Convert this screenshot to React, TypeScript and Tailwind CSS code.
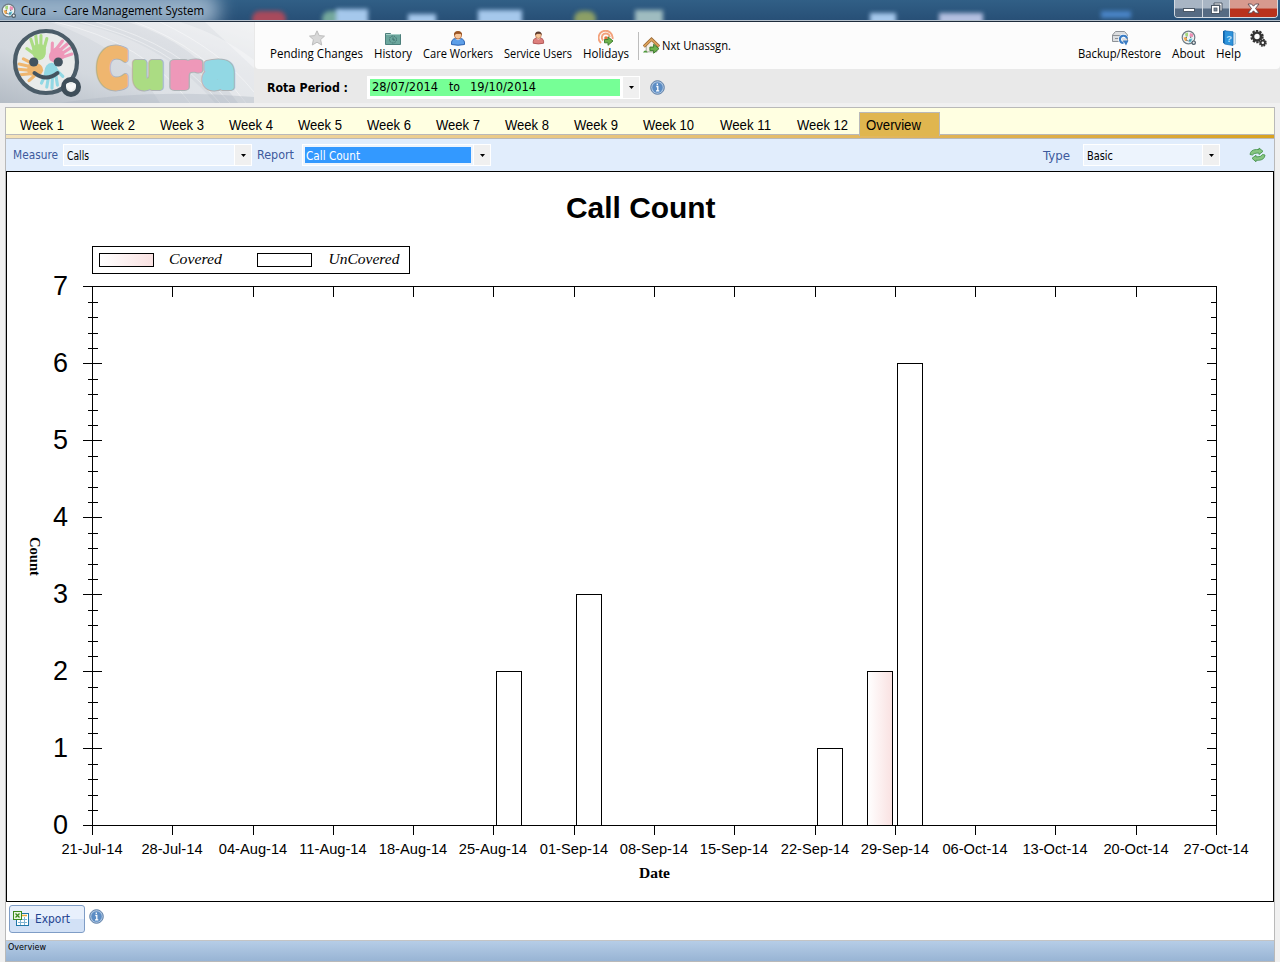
import React from 'react';

const UI = "font-['Open_Sans','Noto_Sans',sans-serif]";
const TAH = "font-['DejaVu_Sans_Condensed','DejaVu_Sans',sans-serif]";

/* Text squeezed or stretched to an exact advance width. */
function Fit({ text, w, size, family, color = '#000', weight = 400, h = 16, base = 12 }: {
  text: string; w: number; size: number; family: string; color?: string; weight?: number; h?: number; base?: number;
}) {
  return (
    <svg width={w} height={h} className="block shrink-0 overflow-visible">
      <text x="0" y={base} textLength={w} lengthAdjust="spacingAndGlyphs" fontSize={size} fontFamily={family} fontWeight={weight} fill={color} className="whitespace-pre">
        {text}
      </text>
    </svg>
  );
}

const SEGOE = 'Open Sans, Noto Sans, sans-serif';
const TAHOMA = 'DejaVu Sans Condensed, DejaVu Sans, sans-serif';
const ARIAL = 'Liberation Sans, Arial, sans-serif';
const TIMES = 'Liberation Serif, Times New Roman, serif';

function Hand({ x, y, r, color, s = 1 }: { x: number; y: number; r: number; color: string; s?: number }) {
  return (
    <g transform={`translate(${x} ${y}) rotate(${r}) scale(${s})`} stroke={color} fill={color} strokeLinecap="round">
      <path d="M-6 0Q-6 -5 0 -5Q6 -5 6 0Q6 8 0 9Q-6 8 -6 0Z" stroke="none" />
      <path d="M-4.5 -2L-6.5 -10M-1.5 -3L-2 -13M1.8 -3L2.6 -12.5M4.5 -1L7.5 -9.5M-4.5 3L-10.5 -2" strokeWidth="2.7" fill="none" />
    </g>
  );
}

function Logo() {
  return (
    <svg width="254" height="81" viewBox="0 22 254 81" className="block shrink-0">
      <defs>
        <linearGradient id="bn" x1="0" y1="1" x2="1" y2="0">
          <stop offset="0" stopColor="#b4bcc5" />
          <stop offset="0.35" stopColor="#d3d8de" />
          <stop offset="0.7" stopColor="#dcdfe4" />
          <stop offset="1" stopColor="#ebedef" />
        </linearGradient>
        <clipPath id="face"><circle cx="46" cy="62" r="29" /></clipPath>
      </defs>
      <rect x="0" y="22" width="254" height="81" fill="url(#bn)" />
      <path d="M70 22Q160 38 215 103H160Q130 50 50 22Z" fill="#fff" opacity="0.22" />
      <path d="M128 22Q195 42 238 103H254V60Q220 34 180 22Z" fill="#fff" opacity="0.32" />
      <path d="M205 22L254 68V22Z" fill="#fff" opacity="0.35" />
      <path d="M55 22Q145 42 190 103M80 22Q170 42 220 103M96 22Q180 44 230 103M135 22Q205 48 246 103M160 22Q220 50 254 92" fill="none" stroke="#fff" strokeWidth="0.7" opacity="0.6" />
      <path d="M60 103Q150 88 254 97V103Z" fill="#a9b3be" opacity="0.35" />
      <circle cx="46" cy="62" r="30.5" fill="#e9ebea" />
      <g clipPath="url(#face)">
        <Hand x={39} y={50} r={-4} color="#abdc83" s={1.15} />
        <Hand x={58} y={54} r={52} color="#ee98b9" s={1.15} />
        <Hand x={33} y={69} r={-82} color="#efb66f" s={1.15} />
        <Hand x={51} y={73} r={185} color="#92d8e4" s={1.15} />
      </g>
      <circle cx="46" cy="62" r="31" fill="none" stroke="#4b5c68" strokeWidth="4.2" />
      <circle cx="33.7" cy="62" r="4.6" fill="#43535f" />
      <circle cx="58.3" cy="62" r="4.6" fill="#43535f" />
      <path d="M34.5 73Q46 82 57.5 73" fill="none" stroke="#43535f" strokeWidth="4" strokeLinecap="round" />
      <circle cx="71" cy="87" r="7.5" fill="#e9ebea" stroke="#3f4e59" strokeWidth="5" />
      <path d="M71 91L66 86.5Q65.5 82.5 69 83L71 84.5L73 83Q76.500 82.500 76 86.500Z" fill="#f6f7f7" />
      <g fontFamily="DejaVu Sans, sans-serif" fontWeight="700" strokeLinejoin="round">
        {[
          ['C', 97, 87, 51, 31, '#efb66f'],
          ['u', 132.5, 87.2, 44, 31, '#abdc83'],
          ['r', 169.5, 87.2, 44, 29, '#ee98b9'],
          ['a', 203.500, 87.2, 44, 31, '#92d8e4'],
        ].map(([c, x, y, s, w, f]) => (
          <g key={c as string}>
            <text x={x} y={y} fontSize={s} textLength={w} lengthAdjust="spacingAndGlyphs" fill="#aeb3b6" stroke="#aeb3b6" strokeWidth="7.8">{c}</text>
            <text x={x} y={y} fontSize={s} textLength={w} lengthAdjust="spacingAndGlyphs" fill={f as string} stroke={f as string} strokeWidth="5.8">{c}</text>
          </g>
        ))}
      </g>
    </svg>
  );
}

function SmallFace() {
  return (
    <svg width="16" height="16" viewBox="0 0 16 16" className="block shrink-0">
      <circle cx="7.500" cy="7.500" r="6.300" fill="#f0f3f3" stroke="#707d86" strokeWidth="1.200" />
      <path d="M4 3.500L7 2.500V6.500L4.500 6Z" fill="#a4d87b" />
      <path d="M9 3L12 4V7L8.500 6.500Z" fill="#ed8fb4" />
      <path d="M2.500 7.500L6 7V11L4 11Z" fill="#efa950" />
      <path d="M8 9L11.500 8.500L10 12L8 12.500Z" fill="#5fc6dc" />
      <circle cx="5.300" cy="7.300" r=".7" fill="#5d6c77" />
      <circle cx="9.700" cy="7.300" r=".7" fill="#5d6c77" />
      <path d="M5 10Q7.500 12 10 10" fill="none" stroke="#5d6c77" strokeWidth=".8" />
      <circle cx="12.700" cy="12.700" r="1.700" fill="#eee" stroke="#4b5c68" strokeWidth="1.200" />
    </svg>
  );
}

function Person({ shirt, edge, hair, small = false }: { shirt: string; edge: string; hair: string; small?: boolean }) {
  return (
    <svg width="16" height="16" viewBox="0 0 16 16" className="block">
      <g transform={small ? 'translate(2 .5) scale(.8 .88)' : undefined}>
        <path d="M1.500 14.500Q1 9 5.500 8.500H10.500Q15 9 14.500 14.500Q8 16 1.500 14.500Z" fill={shirt} stroke={edge} />
        <path d="M5.500 8.500Q8 12 10.500 8.500Z" fill="#fff" opacity=".8" />
        <path d="M4.500 3.500H11.500V6Q11 9 8 9Q5 9 4.500 6Z" fill="#f7c79b" stroke="#b5683a" strokeWidth=".8" />
        <path d="M4 5.500Q3.500 1 8 1Q12.500 1 12 5.500L10.500 3.800H6.500Z" fill={hair} />
      </g>
    </svg>
  );
}

const GreenArrow = () => (
  <path d="M6.500 9.500H10V6.800L15 11L10 15.300V12.800H6.500Z" fill="#6fb24d" stroke="#39792b" strokeWidth=".9" />
);

function Star() {
  return (
    <svg width="16" height="16" viewBox="0 0 16 16" className="block">
      <path d="M8 .8L10.200 5.600L15.500 6.100L11.600 9.600L12.700 15L8 12.200L3.300 15L4.400 9.600L.5 6.100L5.800 5.600Z" fill="#d8d8d8" stroke="#bdbdbd" />
    </svg>
  );
}
function Folder() {
  return (
    <svg width="16" height="16" viewBox="0 0 16 16" className="block">
      <path d="M.5 3.500H5.500L6.500 4.500H15.500V14.500H.5Z" fill="#6ba69d" stroke="#4c7f7b" />
      <path d="M1 4.500H15" stroke="#a8cec7" />
      <circle cx="8" cy="9.500" r="3.500" fill="none" stroke="#3f6d6b" strokeDasharray="1.400 1" />
      <path d="M8 7.500V10H10" fill="none" stroke="#3f6d6b" />
    </svg>
  );
}
function Holiday() {
  return (
    <svg width="16" height="16" viewBox="0 0 16 16" className="block">
      <g fill="none" stroke="#f3a27c" strokeWidth="1.900">
        <path d="M3 13A7 7 0 1 1 14.500 9" />
        <path d="M5.200 10.500A4 4 0 1 1 11.800 7" />
      </g>
      <circle cx="8" cy="8" r="1.800" fill="#e8743c" />
      <GreenArrow />
    </svg>
  );
}
function House() {
  return (
    <svg width="17" height="17" viewBox="0 0 16 16" className="block shrink-0">
      <path d="M3 8L8 3L13 8V14H3Z" fill="#f3efe6" stroke="#8e8e86" strokeWidth=".7" />
      <path d="M.8 9L8 2L15.200 9" fill="none" stroke="#9b6a35" strokeWidth="2.800" />
      <path d="M1 8.800L8 2.200L15 8.800" fill="none" stroke="#dda35c" strokeWidth="1.500" />
      <path d="M0 14.500Q2 11 4.500 14.500Z" fill="#4f9a3c" />
      <GreenArrow />
    </svg>
  );
}
function Backup() {
  return (
    <svg width="17" height="16" viewBox="0 0 17 16" className="ml-[2px] block">
      <path d="M3.500 1.500H12.500L15.500 5V11.500H.5V5Z" fill="#dcdee0" stroke="#8e9297" />
      <path d="M.5 5.500H15.500M3 8.500H9" stroke="#8e9297" />
      <path d="M14.800 8A3.600 3.600 0 1 0 11 13" fill="none" stroke="#fff" strokeWidth="3.600" />
      <path d="M15 8.500A3.600 3.600 0 1 0 11.500 13" fill="none" stroke="#3a7cc4" strokeWidth="2" />
      <path d="M11 10.500H16.500L14 15.500Z" fill="#3a7cc4" />
    </svg>
  );
}
function Book() {
  return (
    <svg width="16" height="16" viewBox="0 0 16 16" className="block">
      <path d="M11 2L14.500 3V14L11 15Z" fill="#d6e8f4" stroke="#8fb7d1" strokeWidth=".6" />
      <path d="M2 1L5 .5V14L2 13Z" fill="#0f62a8" />
      <path d="M3.500 .8L12 1.800V15.500L3.500 14Z" fill="#2e93db" stroke="#1a6db3" strokeWidth=".7" />
      <text x="5.300" y="11.500" fontSize="9.500" fontWeight="700" fontFamily={ARIAL} fill="#b9e2fb">?</text>
    </svg>
  );
}
function Gears() {
  return (
    <svg width="17" height="17" viewBox="0 0 17 17" className="block">
      <circle cx="7" cy="6.500" r="5.700" fill="none" stroke="#333" strokeWidth="2" strokeDasharray="2.300 1.280" />
      <circle cx="7" cy="6.500" r="4" fill="none" stroke="#333" strokeWidth="2.600" />
      <circle cx="12.800" cy="12.800" r="3.200" fill="#fff" stroke="#333" strokeWidth="1.500" strokeDasharray="1.600 .9" />
      <circle cx="12.800" cy="12.800" r="2.100" fill="#fff" stroke="#333" strokeWidth="1.700" />
    </svg>
  );
}
function Info() {
  return (
    <svg width="15" height="15" viewBox="0 0 15 15" className="block shrink-0">
      <circle cx="7.500" cy="7.500" r="6.800" fill="#a9c3e0" stroke="#5d7ea6" />
      <circle cx="7.500" cy="7.500" r="5.200" fill="#5b8cc4" />
      <path d="M6.300 6.500H7.800V10.500M6 10.800H9.300M7.300 3.500V5" fill="none" stroke="#fff" strokeWidth="1.300" />
    </svg>
  );
}
function Refresh() {
  return (
    <svg width="17" height="16" viewBox="0 0 17 15" className="block shrink-0">
      <path d="M1 7Q1.500 2.200 7.500 2H10V.5L14 3.800L10 7V5.600H8Q4.500 5.500 3.500 7.500Z" fill="#86c57f" stroke="#4a9550" strokeWidth=".9" />
      <path d="M16 7.500Q15.500 12.500 9.500 12.800H7V14.300L3 10.800L7 7.800V9.300H9Q12.500 9.300 13.500 7Z" fill="#86c57f" stroke="#4a9550" strokeWidth=".9" />
    </svg>
  );
}
function Excel() {
  return (
    <svg width="17" height="16" viewBox="0 0 17 16" className="block shrink-0">
      <rect x="3.500" y="2.500" width="12" height="12" fill="#fff" stroke="#1f76a8" />
      <path d="M9 4.500H14" stroke="#e7a93c" strokeWidth="1.500" />
      <path d="M5 8.500H14M5 11.500H14M7.500 6V14M11.500 6V14" stroke="#7fb4d3" />
      <rect x=".5" y=".5" width="8" height="8" fill="#e9f6df" stroke="#3c8a1c" />
      <path d="M2.500 2.500L6.500 6.500M6.500 2.500L2.500 6.500" stroke="#3c8a1c" strokeWidth="1.300" />
    </svg>
  );
}

function Tool({ icon, label, w }: { icon: React.ReactNode; label: string; w: number }) {
  return (
    <div className="flex flex-col items-center">
      {icon}
      <Fit text={label} w={w} size={12} family={SEGOE} h={16} base={12} />
    </div>
  );
}

function DropButton() {
  return (
    <div className="flex w-4 shrink-0 items-center justify-center self-stretch bg-[#f0f0f0]">
      <svg width="5" height="3" className="block"><path d="M0 0H5L2.500 3Z" fill="#000" /></svg>
    </div>
  );
}

function TitleBar() {
  const blobs = [
    'left-[252px] top-[11px] h-[16px] w-[34px] bg-[#a84a5c] rounded-full',
    'left-[322px] top-[11px] h-[16px] w-[22px] bg-[#74a89c] rounded-full',
    'left-[336px] top-[9px] h-[18px] w-[32px] bg-[#a5c8ec]',
    'left-[408px] top-[14px] h-[14px] w-[28px] bg-[#a5c8ec]',
    'left-[478px] top-[10px] h-[18px] w-[44px] bg-[#a5c8ec]',
    'left-[574px] top-[11px] h-[16px] w-[22px] bg-[#8c9f66] rounded-full',
    'left-[635px] top-[10px] h-[18px] w-[28px] bg-[#9fbcc0]',
    'left-[870px] top-[13px] h-[14px] w-[26px] bg-[#a5c8ec]',
    'left-[939px] top-[13px] h-[14px] w-[44px] bg-[#b3bfe0]',
    'left-[1101px] top-[11px] h-[7px] w-[30px] bg-[#4a85c8]',
  ];
  return (
    <header className="relative flex h-[22px] shrink-0 overflow-hidden border-b border-[#1f2c3c] bg-linear-to-b from-[#315f86] to-[#274f76]">
      {blobs.map((b) => <div key={b} className={`absolute blur-[2px] ${b}`} />)}
      <div className="absolute -left-8 -top-2 h-9 w-[252px] rounded-full bg-[#a9bfd4] opacity-85 blur-[9px]" />
      <div className="absolute bottom-0 left-0 h-px w-full bg-[#b5c1cd]" />
      <div className="relative flex flex-1 items-start pl-px pt-[3px]">
        <SmallFace />
        <div className="flex pl-1">
          <Fit text="Cura" w={25} size={12} family={SEGOE} />
          <div className="pl-[7px]"><Fit text="-" w={4} size={12} family={SEGOE} /></div>
          <div className="pl-[7px]"><Fit text="Care Management System" w={140} size={12} family={SEGOE} /></div>
        </div>
      </div>
      <div className="relative mr-[2px] flex h-[18px] w-[104px] overflow-hidden rounded-b-[4px] border border-t-0 border-[#d3dae2]">
        <div className="flex w-[28px] items-center justify-center border-r border-[#d3dae2] bg-linear-to-b from-[#a8b5c4] from-45% to-[#566b83] to-55%">
          <div className="mt-[3px] h-[4px] w-[12px] border border-[#4c5866] bg-white" />
        </div>
        <div className="flex w-[27px] items-center justify-center border-r border-[#d3dae2] bg-linear-to-b from-[#a8b5c4] from-45% to-[#566b83] to-55%">
          <svg width="13" height="13" className="block">
            <path d="M4 1H12V9H10V3H4Z" fill="#fff" stroke="#4c5866" />
            <rect x="1.500" y="3.500" width="8" height="8" fill="#fff" stroke="#4c5866" />
            <rect x="4" y="6" width="3" height="3" fill="#7b8998" stroke="#4c5866" strokeWidth=".8" />
          </svg>
        </div>
        <div className="flex flex-1 items-center justify-center bg-linear-to-b from-[#d79a8e] from-45% to-[#b8321d] to-55%">
          <svg width="13" height="11" className="block">
            <path d="M1 1H4.500L6.500 3.200L8.500 1H12L8.500 5.500L12 10H8.500L6.500 7.800L4.500 10H1L4.500 5.500Z" fill="#fff" stroke="#5b4a52" strokeWidth=".9" />
          </svg>
        </div>
      </div>
    </header>
  );
}

const weeks = Array.from({ length: 12 }, (_, i) => `Week ${i + 1}`);

const dates = ['21-Jul-14', '28-Jul-14', '04-Aug-14', '11-Aug-14', '18-Aug-14', '25-Aug-14', '01-Sep-14', '08-Sep-14', '15-Sep-14', '22-Sep-14', '29-Sep-14', '06-Oct-14', '13-Oct-14', '20-Oct-14', '27-Oct-14'];
const bars = [
  { x: 496, v: 2, covered: false },
  { x: 576, v: 3, covered: false },
  { x: 817, v: 1, covered: false },
  { x: 867, v: 2, covered: true },
  { x: 897, v: 6, covered: false },
];

function Chart() {
  const xs = dates.map((_, i) => Math.round(92 + (i * 1124) / 14 - 0.06) + 0.5);
  const minors = Array.from({ length: 36 }, (_, i) => i);
  return (
    <svg width="1267" height="729" viewBox="7 172 1267 729" className="block">
      <defs>
        <linearGradient id="cov"><stop offset="0" stopColor="#fff" /><stop offset="1" stopColor="#f9e1e1" /></linearGradient>
      </defs>
      <text x="566" y="218" textLength="149.500" lengthAdjust="spacingAndGlyphs" fontSize="29.6" fontWeight="700" fontFamily={ARIAL}>Call Count</text>
      <g fill="#fff" stroke="#000">
        <rect x="92.500" y="246.500" width="317" height="27" />
        <rect x="99.500" y="253.500" width="54" height="13" fill="url(#cov)" />
        <rect x="257.500" y="253.500" width="54" height="13" />
      </g>
      <g fontFamily={TIMES} fontStyle="italic" fontSize="14.67">
        <text x="169" y="264" textLength="53" lengthAdjust="spacingAndGlyphs">Covered</text>
        <text x="328.500" y="264" textLength="71" lengthAdjust="spacingAndGlyphs">UnCovered</text>
      </g>
      <g stroke="#000" fill="none" shapeRendering="crispEdges">
        {bars.map((b) => (
          <rect key={b.x} x={b.x + 0.5} y={825.5 - b.v * 77} width="25" height={b.v * 77} fill={b.covered ? 'url(#cov)' : '#fff'} />
        ))}
        <rect x="92.500" y="286.500" width="1124" height="539" />
        {xs.map((x) => <path key={x} d={`M${x} 286V297M${x} 825V835`} />)}
        {minors.map((i) => {
          const y = Math.ceil(825 - i * 15.4 - 0.01) + 0.5;
          return i % 5 === 0
            ? <path key={i} d={i === 0 || i === 35 ? `M83 ${y}H92` : `M83 ${y}H102M1207 ${y}H1216`} />
            : <path key={i} d={`M88 ${y}H98M1211 ${y}H1216`} />;
        })}
      </g>
      <g fontFamily={ARIAL} fontSize="27" textAnchor="middle">
        {[0, 1, 2, 3, 4, 5, 6, 7].map((n) => <text key={n} x="60.500" y={833.6 - n * 77}>{n}</text>)}
      </g>
      <g fontFamily={ARIAL} fontSize="14.67" textAnchor="middle">
        {dates.map((d, i) => <text key={d} x={xs[i] - 0.5} y="854">{d}</text>)}
      </g>
      <g fontFamily={TIMES} fontWeight="700" fontSize="14.67">
        <text x="639" y="878" textLength="31" lengthAdjust="spacingAndGlyphs">Date</text>
        <text transform="translate(30 537) rotate(90)" textLength="39" lengthAdjust="spacingAndGlyphs">Count</text>
      </g>
    </svg>
  );
}

export default function App() {
  return (
    <div className={`flex h-[962px] w-[1280px] flex-col overflow-hidden bg-[#f0f0f0] ${UI}`}>
      <TitleBar />
      <div className="flex h-[81px] shrink-0 bg-[#e9e9e9]">
        <Logo />
        <div className="flex flex-1 flex-col pl-px">
          <div className="flex h-[47px] items-start rounded-b-[4px] bg-[#fcfcfc] pl-[15px] pr-[13px] pt-2">
            <div className="flex gap-[11px]">
              <Tool icon={<Star />} label="Pending Changes" w={93} />
              <Tool icon={<Folder />} label="History" w={38} />
              <Tool icon={<Person shirt="#5e9fe8" edge="#2c62b0" hair="#9a5524" />} label="Care Workers" w={70} />
              <Tool icon={<Person shirt="#dd7f7c" edge="#a94a4a" hair="#5a3a2c" small />} label="Service Users" w={68} />
              <Tool icon={<Holiday />} label="Holidays" w={46} />
            </div>
            <div className="ml-[9px] mt-[2px] h-7 w-px bg-[#bdbdbd]" />
            <div className="ml-1 flex items-center gap-[2px] pt-[7px]">
              <House />
              <Fit text="Nxt Unassgn." w={69} size={12} family={SEGOE} />
            </div>
            <div className="ml-auto flex gap-[11px]">
              <Tool icon={<Backup />} label="Backup/Restore" w={83} />
              <Tool icon={<SmallFace />} label="About" w={33} />
              <Tool icon={<Book />} label="Help" w={25} />
              <div className="-ml-[2px]"><Gears /></div>
            </div>
          </div>
          <div className="flex h-[34px] items-center pl-3">
            <Fit text="Rota Period :" w={81} size={13} family={TAHOMA} weight={700} base={13.5} />
            <div className="ml-[19px] mt-[2px] flex h-[23px] w-[273px] bg-white py-px pr-px">
              <div className="my-[2px] ml-[3px] flex h-[17px] w-[250px] items-center bg-[#76ff96] pl-[2px]">
                <Fit text="28/07/2014" w={66} size={12.5} family={TAHOMA} />
                <div className="pl-[11px]"><Fit text="to" w={11} size={12.5} family={TAHOMA} /></div>
                <div className="pl-[10px]"><Fit text="19/10/2014" w={66} size={12.5} family={TAHOMA} /></div>
              </div>
              <div className="ml-auto flex"><DropButton /></div>
            </div>
            <div className="ml-[10px] mt-[2px]"><Info /></div>
          </div>
        </div>
      </div>

      <main className="ml-[5px] mt-1 flex h-[855px] w-[1270px] flex-col border border-[#b9b9b9] bg-white">
        <nav className="flex h-[27px] shrink-0 items-end border-b border-[#b9b9b9] bg-[#ffffe1] pl-[14px]">
          {weeks.map((w, i) => (
            <div key={w} className={i < 9 ? (i === 0 ? 'h-4 w-[71px]' : 'h-4 w-[69px]') : 'h-4 w-[77px]'}>
              <Fit text={w} w={i < 9 ? 44 : 51} size={14} family={ARIAL} />
            </div>
          ))}
          <div className="relative -mb-[2px] -ml-[15px] flex h-6 w-[81px] border border-b-0 border-[#b9b9b9] bg-[#e0b64f] pl-[6px] pt-[5px]">
            <Fit text="Overview" w={55} size={14} family={ARIAL} />
          </div>
        </nav>
        <div className="h-1 shrink-0 border-b border-[#b9b9b9] bg-linear-to-r from-[#f5e3b9] to-[#d9a21e]" />
        <div className="flex h-[32px] shrink-0 items-center bg-[#e1edfc] pl-[7px] pr-[8px]">
          <Fit text="Measure" w={45} size={12} family={TAHOMA} color="#3d5a9c" base={12} />
          <div className="ml-[5px] flex h-[22px] w-[189px] items-center border border-white bg-[#edf4fd] pl-[3px]">
            <Fit text="Calls" w={22} size={12} family={TAHOMA} base={12.5} />
            <div className="ml-auto flex self-stretch border-l border-white"><DropButton /></div>
          </div>
          <div className="ml-[5px]"><Fit text="Report" w={37} size={12} family={TAHOMA} color="#3d5a9c" base={12} /></div>
          <div className="ml-2 flex h-[22px] w-[189px] items-center border border-white bg-[#edf4fd] pl-[2px]">
            <div className="flex h-4 w-[166px] items-center bg-[#3399ff] pl-px">
              <Fit text="Call Count" w={54} size={12} family={TAHOMA} color="#fff" base={12.5} />
            </div>
            <div className="ml-auto flex self-stretch border-l border-white"><DropButton /></div>
          </div>
          <div className="ml-auto"><Fit text="Type" w={27} size={12} family={TAHOMA} color="#3d5a9c" base={12.5} /></div>
          <div className="ml-[13px] flex h-[22px] w-[137px] items-center border border-white bg-[#edf4fd] pl-[3px]">
            <Fit text="Basic" w={26} size={12} family={TAHOMA} base={12.5} />
            <div className="ml-auto flex self-stretch border-l border-white"><DropButton /></div>
          </div>
          <div className="ml-[29px]"><Refresh /></div>
        </div>
        <section className="h-[731px] shrink-0 overflow-hidden border border-black bg-white">
          <Chart />
        </section>
        <div className="flex h-[38px] shrink-0 items-start pl-[3px] pt-[3px]">
          <div className="flex h-7 w-[76px] items-center gap-[5px] rounded-[3px] border border-[#7f9dc6] bg-linear-to-b from-[#e8f0fc] from-50% to-[#d2e1f6] to-50% pl-[3px]">
            <Excel />
            <Fit text="Export" w={35} size={12.5} family={TAHOMA} color="#1f4390" base={12} />
          </div>
          <div className="ml-1 mt-1"><Info /></div>
        </div>
        <footer className={`flex flex-1 border-t border-[#c4c4c4] bg-linear-to-b from-[#b6cde7] to-[#98b4d4] pl-[2px] ${TAH}`}>
          <Fit text="Overview" w={38} size={9.3} family={TAHOMA} h={12} base={9} />
        </footer>
      </main>
    </div>
  );
}
